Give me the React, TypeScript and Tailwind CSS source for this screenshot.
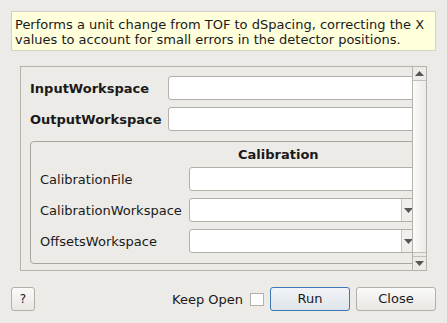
import React from "react";

const Arrow: React.FC<{ up?: boolean }> = ({ up }) => (
  <svg width="9" height="5" viewBox="0 0 9 5">
    {up ? (
      <path d="M0 5 L4.5 0 L9 5 Z" fill="#555" />
    ) : (
      <path d="M0 0 L9 0 L4.5 5 Z" fill="#555" />
    )}
  </svg>
);

const TextBox: React.FC = () => (
  <div className="h-[24px] flex-1 bg-white border border-[#b2aea8] rounded-[3px] mr-[-4px]" />
);

const Combo: React.FC = () => (
  <div className="h-[24px] flex-1 flex bg-white border border-[#b2aea8] rounded-[3px] mr-[-4px]">
    <div className="flex-1" />
    <div className="w-[14px] mr-[3px] flex items-center justify-center bg-[#f1efec] border-l border-[#c9c5bf]">
      <Arrow />
    </div>
  </div>
);

const App: React.FC = () => {
  return (
    <div
      className="w-[447px] h-[323px] bg-[#edebe7] text-[13px] text-[#1a1a1a] overflow-hidden flex flex-col"
      style={{ fontFamily: '"DejaVu Sans", sans-serif' }}
    >
      {/* Description */}
      <div className="mt-[11px] ml-[11px] w-[425px] h-[40px] bg-[#ffffdc] border border-[#d4d0ca] pl-[3px] pt-[5px] leading-[15px] whitespace-nowrap">
        Performs a unit change from TOF to dSpacing, correcting the X
        <br />
        values to account for small errors in the detector positions.
      </div>

      {/* Scroll area */}
      <div className="mt-[15px] ml-[20px] w-[407px] h-[205px] border border-[#b5b1ab] flex">
        <div className="flex-1 overflow-hidden pt-[9px] pl-[9px]">
          <div className="flex items-center h-[24px]">
            <span className="w-[138px] font-bold pt-[2px]">InputWorkspace</span>
            <TextBox />
          </div>
          <div className="flex items-center h-[24px] mt-[7px]">
            <span className="w-[138px] font-bold pt-[2px]">OutputWorkspace</span>
            <TextBox />
          </div>

          {/* Calibration group */}
          <div className="mt-[10px] h-[123px] w-[400px] border border-[#a9a59f] rounded-[4px] pl-[9px] pr-[14px]">
            <div className="h-[25px] flex items-center font-bold pl-[198px] pt-[1px]">
              Calibration
            </div>
            <div className="flex items-center h-[24px]">
              <span className="w-[149px] whitespace-nowrap pt-[2px]">CalibrationFile</span>
              <TextBox />
            </div>
            <div className="flex items-center h-[24px] mt-[7px]">
              <span className="w-[149px] whitespace-nowrap pt-[2px]">CalibrationWorkspace</span>
              <Combo />
            </div>
            <div className="flex items-center h-[24px] mt-[7px]">
              <span className="w-[149px] whitespace-nowrap pt-[2px]">OffsetsWorkspace</span>
              <Combo />
            </div>
          </div>
        </div>

        {/* Scrollbar */}
        <div className="w-[14px] border-l border-[#b5b1ab] flex flex-col bg-[#edebe7]">
          <div className="h-[14px] flex items-center justify-center border-b border-[#c2beb8]">
            <Arrow up />
          </div>
          <div className="h-[172px] bg-gradient-to-r from-[#fbfbfa] to-[#eceae7] border-b border-[#c2beb8]" />
          <div className="flex-1" />
          <div className="h-[14px] flex items-center justify-center border-t border-[#c2beb8]">
            <Arrow />
          </div>
        </div>
      </div>

      {/* Bottom buttons */}
      <div className="mt-[16px] flex items-center h-[24px] px-[11px]">
        <button className="w-[24px] h-[24px] rounded-[3px] border border-[#b3afa9] bg-gradient-to-b from-[#fafaf9] to-[#e9e7e4] text-[12px]">
          ?
        </button>
        <div className="flex-1" />
        <span className="pt-[1px]">Keep Open</span>
        <div className="ml-[7px] w-[14px] h-[13px] bg-white border border-[#b3afa9]" />
        <button className="ml-[6px] w-[80px] h-[24px] rounded-[3px] border border-[#3b78b5] bg-gradient-to-b from-[#f1f4f7] to-[#dfe5ea] text-[13px]">
          Run
        </button>
        <button className="ml-[6px] w-[80px] h-[24px] rounded-[3px] border border-[#b3afa9] bg-gradient-to-b from-[#fafaf9] to-[#e9e7e4] text-[13px]">
          Close
        </button>
      </div>
    </div>
  );
};

export default App;
